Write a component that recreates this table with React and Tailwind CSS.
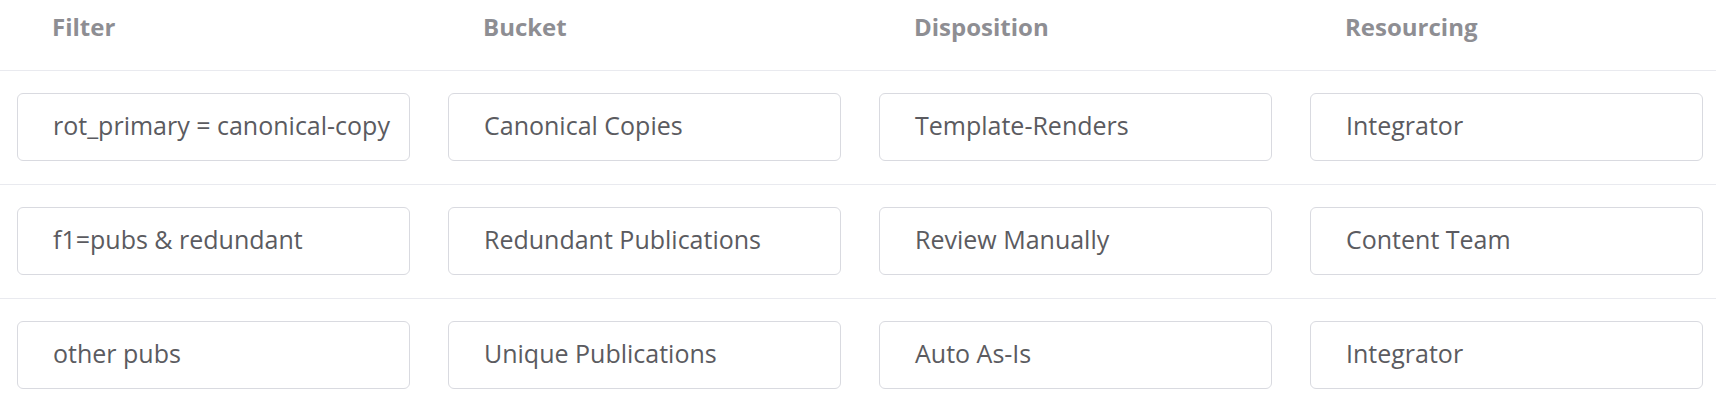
const columns = ["Filter", "Bucket", "Disposition", "Resourcing"];

const rows = [
  ["rot_primary = canonical-copy", "Canonical Copies", "Template-Renders", "Integrator"],
  ["f1=pubs & redundant", "Redundant Publications", "Review Manually", "Content Team"],
  ["other pubs", "Unique Publications", "Auto As-Is", "Integrator"],
];

const Cell = ({ value }) => (
  <div className="w-[393px] h-[68px] flex items-center border border-[#d9dae0] rounded-md bg-white pl-[35px] pb-[5px] text-[25px] leading-9 text-[#5b5b60] whitespace-nowrap">
    {value}
  </div>
);

const App = () => {
  return (
    <div
      className="w-[1716px] h-[406px] overflow-hidden bg-white"
      style={{ fontFamily: "'Open Sans', Lato, sans-serif" }}
    >
      {/* HEADER */}
      <div className="h-[71px] border-b border-[#e9eaef] flex gap-[38px] pl-[17px] pt-[9px]">
        {columns.map((c) => (
          <div
            key={c}
            className="w-[393px] pl-[35px] text-[24px] leading-9 font-bold text-[#8e8e93]"
          >
            {c}
          </div>
        ))}
      </div>

      {/* ROWS */}
      {rows.map((row, i) => (
        <div
          key={i}
          className="h-[114px] border-b border-[#e9eaef] flex gap-[38px] pl-[17px] pt-[22px]"
        >
          {row.map((v, j) => (
            <Cell key={j} value={v} />
          ))}
        </div>
      ))}
    </div>
  );
};

export default App;
